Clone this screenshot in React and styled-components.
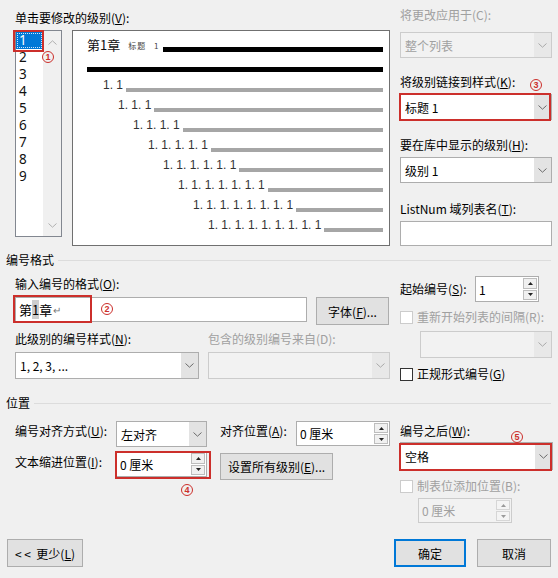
import React from 'react'
import styled, { createGlobalStyle, css } from 'styled-components'

const RED = '#cc2f2b'

const GlobalStyle = createGlobalStyle`
  html, body {
    margin: 0;
    padding: 0;
    background: #f0f0f0;
  }
  body {
    font-family: "Noto Sans CJK SC", "Noto Sans", sans-serif;
    font-size: 12px;
    color: #000;
  }
  u {
    text-decoration: underline;
    text-underline-offset: 1px;
  }
`

const Dialog = styled.div`
  position: relative;
  width: 558px;
  height: 578px;
  display: flex;
  flex-direction: column;
  background: #f0f0f0;
  overflow: hidden;
`

const Columns = styled.div`
  display: flex;
  gap: 10px;
  padding-left: 15px;
  margin-top: ${({ $top }) => $top || 0}px;
`

const MainCol = styled.div`
  width: 375px;
  flex: none;
`

const SideCol = styled.div`
  width: 152px;
  flex: none;
`

const Label = styled.div`
  height: 16px;
  line-height: 16px;
  white-space: nowrap;
  color: ${({ $disabled }) => ($disabled ? '#a0a0a0' : '#000')};
  margin-top: ${({ $top }) => $top || 0}px;
  margin-left: ${({ $left }) => $left || 0}px;
  margin-bottom: ${({ $gap }) => ($gap === undefined ? 4 : $gap)}px;
  width: ${({ $w }) => ($w ? `${$w}px` : 'auto')};
  flex: none;
`

/* ---------- level list & preview ---------- */

const LevelRow = styled.div`
  display: flex;
  gap: 10px;
  align-items: flex-start;
`

const LevelList = styled.div`
  width: 47px;
  height: 207px;
  box-sizing: border-box;
  border: 1px solid #828790;
  background: #fff;
  display: flex;
`

const LevelItems = styled.div`
  width: 27px;
  padding-top: 1px;
`

const LevelItem = styled.div`
  height: 17px;
  line-height: 17px;
  padding-left: 3px;
  font-family: "Noto Sans", sans-serif;
  font-size: 13.5px;
  color: #111;
  ${({ $selected }) =>
    $selected &&
    css`
      background: #0078d7;
      color: #fff;
      outline: 1px dotted #cfe6fb;
      outline-offset: -2px;
    `}
`

const ScrollBar = styled.div`
  width: 18px;
  background: #f0f0f0;
  display: flex;
  flex-direction: column;
  justify-content: space-between;
  align-items: center;
  padding: 9px 0 8px;
`

const Preview = styled.div`
  width: 318px;
  height: 216px;
  box-sizing: border-box;
  border: 1px solid #707070;
  background: #fff;
  padding: 5px 6px 0 14px;
  display: flex;
  flex-direction: column;
`

const HeadRow = styled.div`
  display: flex;
  align-items: flex-end;
  height: 18px;
  line-height: 18px;
`

const HeadNumber = styled.span`
  font-size: 13px;
  color: #111;
`

const StyleTag = styled.span`
  font-size: 8px;
  color: #444;
  margin-left: 8px;
  letter-spacing: 1px;
  word-spacing: 5px;
  line-height: 16px;
`

const Bar = styled.div`
  flex: 1;
  height: ${({ $h }) => $h || 4}px;
  background: ${({ $dark }) => ($dark ? '#000' : '#a6a6a6')};
  margin-left: ${({ $gap }) => ($gap === undefined ? 3 : $gap)}px;
  margin-bottom: ${({ $bottom }) => $bottom || 0}px;
`

const RuleBar = styled.div`
  height: 5px;
  background: #000;
  margin-top: 13px;
`

const LevelLine = styled.div`
  display: flex;
  align-items: flex-end;
  height: 14px;
  margin-top: 6px;
  padding-left: ${({ $indent }) => $indent}px;
`

const LevelNumber = styled.span`
  font-family: "Liberation Sans", Arial, sans-serif;
  font-size: 12px;
  line-height: 14px;
  color: #333;
  white-space: pre;
`

/* ---------- controls ---------- */

const Combo = styled.div`
  width: ${({ $w }) => $w}px;
  height: ${({ $h }) => $h || 26}px;
  box-sizing: border-box;
  border: 1px solid ${({ $disabled }) => ($disabled ? '#cccccc' : '#adadad')};
  background: ${({ $disabled }) => ($disabled ? '#f2f2f2' : '#fff')};
  color: ${({ $disabled }) => ($disabled ? '#a0a0a0' : '#000')};
  display: flex;
  margin-top: ${({ $top }) => $top || 0}px;
  margin-left: ${({ $left }) => $left || 0}px;
  flex: none;
`

const ComboText = styled.div`
  flex: 1;
  display: flex;
  align-items: center;
  padding-left: 4px;
  white-space: nowrap;
  font-size: 12px;
`

const ComboArrow = styled.div`
  width: 17px;
  background: ${({ $disabled }) => ($disabled ? '#e8e8e8' : '#e3e3e3')};
  display: flex;
  align-items: center;
  justify-content: center;
`

const TextBox = styled.div`
  width: ${({ $w }) => $w}px;
  height: 25px;
  box-sizing: border-box;
  border: 1px solid #adadad;
  background: #fff;
  display: flex;
  align-items: center;
  padding-left: 3px;
  font-size: 13px;
  flex: none;
`

const Selected = styled.span`
  background: #cdcdcd;
`

const ReturnMark = styled.span`
  color: #777;
  font-size: 10px;
  margin-left: 1px;
`

const Spin = styled.div`
  width: ${({ $w }) => $w}px;
  height: ${({ $h }) => $h || 25}px;
  box-sizing: border-box;
  border: 1px solid ${({ $disabled }) => ($disabled ? '#cccccc' : '#adadad')};
  background: ${({ $disabled }) => ($disabled ? '#f2f2f2' : '#fff')};
  color: ${({ $disabled }) => ($disabled ? '#a0a0a0' : '#000')};
  display: flex;
  flex: none;
  margin-top: ${({ $top }) => $top || 0}px;
  margin-left: ${({ $left }) => $left || 0}px;
`

const SpinText = styled.div`
  flex: 1;
  display: flex;
  align-items: center;
  padding-left: 3px;
  font-size: 12px;
  white-space: pre;
`

const SpinButtons = styled.div`
  width: 15px;
  display: flex;
  flex-direction: column;
  gap: 1px;
  padding: 1px 1px 1px 0;
  box-sizing: border-box;
`

const SpinButton = styled.div`
  flex: 1;
  border: 1px solid ${({ $disabled }) => ($disabled ? '#d6d6d6' : '#bdbdbd')};
  background: ${({ $disabled }) => ($disabled ? '#f4f4f4' : '#f0f0f0')};
  display: flex;
  align-items: center;
  justify-content: center;
`

const Button = styled.button`
  width: ${({ $w }) => $w}px;
  height: ${({ $h }) => $h || 28}px;
  box-sizing: border-box;
  border: ${({ $primary }) => ($primary ? '2px solid #0078d7' : '1px solid #adadad')};
  background: #e1e1e1;
  font-family: inherit;
  font-size: 12px;
  color: #000;
  padding: 0;
  margin-left: ${({ $left }) => $left || 0}px;
  margin-top: ${({ $top }) => $top || 0}px;
  flex: none;
  white-space: pre;
`

const CheckRow = styled.div`
  display: flex;
  align-items: center;
  gap: 4px;
  height: 16px;
  line-height: 16px;
  white-space: nowrap;
  margin-top: ${({ $top }) => $top || 0}px;
  color: ${({ $disabled }) => ($disabled ? '#a0a0a0' : '#000')};
`

const CheckBox = styled.span`
  width: 13px;
  height: 13px;
  box-sizing: border-box;
  border: 1px solid ${({ $disabled }) => ($disabled ? '#cccccc' : '#333')};
  background: #fff;
  flex: none;
`

const InlineRow = styled.div`
  display: flex;
  align-items: ${({ $align }) => $align || 'flex-start'};
  gap: ${({ $gap }) => $gap || 0}px;
  margin-top: ${({ $top }) => $top || 0}px;
`

const SectionTitle = styled.div`
  display: flex;
  align-items: center;
  height: 16px;
  line-height: 16px;
  padding: 0 7px 0 6px;
  margin-top: ${({ $top }) => $top}px;
  &::after {
    content: '';
    flex: 1;
    height: 1px;
    background: #dcdcdc;
    margin-left: 4px;
  }
`

const Footer = styled.div`
  margin-top: auto;
  display: flex;
  justify-content: space-between;
  padding: 0 7px 11px;
`

const FooterGroup = styled.div`
  display: flex;
  gap: 11px;
`

/* ---------- annotations (overlays) ---------- */

const Mark = styled.div`
  position: absolute;
  left: ${({ $x }) => $x}px;
  top: ${({ $y }) => $y}px;
  width: ${({ $w }) => $w}px;
  height: ${({ $h }) => $h}px;
  box-sizing: border-box;
  border: 2px solid ${RED};
  pointer-events: none;
`

const Callout = styled.div`
  position: absolute;
  left: ${({ $x }) => $x - 6}px;
  top: ${({ $y }) => $y - 6}px;
  width: 12px;
  height: 12px;
  box-sizing: border-box;
  border: 1.2px solid ${RED};
  border-radius: 50%;
  color: ${RED};
  font-family: "Liberation Sans", Arial, sans-serif;
  font-weight: bold;
  font-size: 9px;
  line-height: 10px;
  text-align: center;
`

/* ---------- small drawings ---------- */

const Chevron = ({ up, color = '#6b6b6b' }) => (
  <svg width="9" height="5" viewBox="0 0 9 5">
    <path
      d={up ? 'M0.5 4.5 L4.5 0.8 L8.5 4.5' : 'M0.5 0.5 L4.5 4.2 L8.5 0.5'}
      fill="none"
      stroke={color}
      strokeWidth="1"
    />
  </svg>
)

const Tri = ({ up, color }) => (
  <svg width="5" height="3" viewBox="0 0 5 3">
    <path d={up ? 'M0 3 L2.5 0 L5 3 Z' : 'M0 0 L2.5 3 L5 0 Z'} fill={color} />
  </svg>
)

const Dropdown = ({ w, h, top, left, disabled, children }) => (
  <Combo $w={w} $h={h} $top={top} $left={left} $disabled={disabled}>
    <ComboText>{children}</ComboText>
    <ComboArrow $disabled={disabled}>
      <Chevron color={disabled ? '#a8a8a8' : '#6b6b6b'} />
    </ComboArrow>
  </Combo>
)

const Spinner = ({ w, h, top, left, disabled, children }) => (
  <Spin $w={w} $h={h} $top={top} $left={left} $disabled={disabled}>
    <SpinText>{children}</SpinText>
    <SpinButtons>
      <SpinButton $disabled={disabled}>
        <Tri up color={disabled ? '#9a9a9a' : '#222'} />
      </SpinButton>
      <SpinButton $disabled={disabled}>
        <Tri color={disabled ? '#9a9a9a' : '#222'} />
      </SpinButton>
    </SpinButtons>
  </Spin>
)

const levels = [2, 3, 4, 5, 6, 7, 8, 9]

export default function App() {
  return (
    <>
      <GlobalStyle />
      <Dialog>
        {/* top: levels and preview */}
        <Columns>
          <MainCol>
            <Label $top={10}>
              单击要修改的级别(<u>V</u>):
            </Label>
            <LevelRow>
              <LevelList>
                <LevelItems>
                  {[1, 2, 3, 4, 5, 6, 7, 8, 9].map((n) => (
                    <LevelItem key={n} $selected={n === 1}>
                      {n}
                    </LevelItem>
                  ))}
                </LevelItems>
                <ScrollBar>
                  <Chevron up color="#b0b0b0" />
                  <Chevron color="#b0b0b0" />
                </ScrollBar>
              </LevelList>
              <Preview>
                <HeadRow>
                  <HeadNumber>第1章</HeadNumber>
                  <StyleTag>标题 1</StyleTag>
                  <Bar $dark $h={5} $gap={4} $bottom={2} />
                </HeadRow>
                <RuleBar />
                {levels.map((lv) => (
                  <LevelLine key={lv} $indent={16 + 15 * (lv - 2)}>
                    <LevelNumber>{Array(lv).fill('1').join('. ')}</LevelNumber>
                    <Bar />
                  </LevelLine>
                ))}
              </Preview>
            </LevelRow>
          </MainCol>
          <SideCol>
            <Label $top={7} $gap={9} $disabled>
              将更改应用于(C):
            </Label>
            <Dropdown w={152} disabled>
              整个列表
            </Dropdown>
            <Label $top={16}>
              将级别链接到样式(<u>K</u>):
            </Label>
            <Dropdown w={152}>标题 1</Dropdown>
            <Label $top={17}>
              要在库中显示的级别(<u>H</u>):
            </Label>
            <Dropdown w={152}>级别 1</Dropdown>
            <Label $top={18}>
              ListNum 域列表名(<u>T</u>):
            </Label>
            <TextBox $w={152} />
          </SideCol>
        </Columns>

        {/* number format */}
        <SectionTitle $top={6}>编号格式</SectionTitle>
        <Columns $top={8}>
          <MainCol>
            <Label $gap={5}>
              输入编号的格式(<u>O</u>):
            </Label>
            <InlineRow $gap={9}>
              <TextBox $w={292}>
                第<Selected>1</Selected>章<ReturnMark>↵</ReturnMark>
              </TextBox>
              <Button $w={73}>
                字体(<u>F</u>)...
              </Button>
            </InlineRow>
            <InlineRow $top={6}>
              <Label $w={193} $gap={5}>
                此级别的编号样式(<u>N</u>):
              </Label>
              <Label $gap={5} $disabled>
                包含的级别编号来自(D):
              </Label>
            </InlineRow>
            <InlineRow $gap={9}>
              <Dropdown w={184} h={27}>
                1, 2, 3, ...
              </Dropdown>
              <Dropdown w={182} h={27} disabled />
            </InlineRow>
          </MainCol>
          <SideCol>
            <InlineRow $align="center">
              <Label $w={75} $gap={0}>
                起始编号(<u>S</u>):
              </Label>
              <Spinner w={64} h={26}>
                1
              </Spinner>
            </InlineRow>
            <CheckRow $top={7} $disabled>
              <CheckBox $disabled />
              <span>重新开始列表的间隔(R):</span>
            </CheckRow>
            <Dropdown w={132} h={27} top={6} left={20} disabled />
            <CheckRow $top={8}>
              <CheckBox />
              <span>
                正规形式编号(<u>G</u>)
              </span>
            </CheckRow>
          </SideCol>
        </Columns>

        {/* position */}
        <SectionTitle $top={13}>位置</SectionTitle>
        <Columns $top={10}>
          <MainCol>
            <InlineRow>
              <Label $w={101} $top={2}>
                编号对齐方式(<u>U</u>):
              </Label>
              <Dropdown w={91}>左对齐</Dropdown>
              <Label $w={76} $left={13} $top={2}>
                对齐位置(<u>A</u>):
              </Label>
              <Spinner w={94}>0 厘米</Spinner>
            </InlineRow>
            <InlineRow $top={4}>
              <Label $w={101} $top={3}>
                文本缩进位置(<u>I</u>):
              </Label>
              <Spinner w={91} h={26}>
                0 厘米
              </Spinner>
              <Button $w={113} $h={27} $left={13} $top={2}>
                设置所有级别(<u>E</u>)...
              </Button>
            </InlineRow>
          </MainCol>
          <SideCol>
            <Label $top={2} $gap={3}>
              编号之后(<u>W</u>):
            </Label>
            <Dropdown w={153} h={28}>
              空格
            </Dropdown>
            <CheckRow $top={8} $disabled>
              <CheckBox $disabled />
              <span>制表位添加位置(B):</span>
            </CheckRow>
            <Spinner w={94} top={4} left={18} disabled>
              0 厘米
            </Spinner>
          </SideCol>
        </Columns>

        <Footer>
          <Button $w={76}>
            {'< <  更少('}
            <u>L</u>)
          </Button>
          <FooterGroup>
            <Button $w={72} $primary>
              确定
            </Button>
            <Button $w={74}>取消</Button>
          </FooterGroup>
        </Footer>

        {/* red annotations */}
        <Mark $x={13} $y={30} $w={31} $h={22} />
        <Callout $x={48} $y={57}>1</Callout>
        <Mark $x={13} $y={295} $w={79} $h={28} />
        <Callout $x={107} $y={309}>2</Callout>
        <Mark $x={399} $y={93} $w={152} $h={28} />
        <Callout $x={536} $y={85}>3</Callout>
        <Mark $x={115} $y={451} $w={96} $h={28} />
        <Callout $x={187} $y={490}>4</Callout>
        <Mark $x={399} $y={443} $w={153} $h={28} />
        <Callout $x={517} $y={437}>5</Callout>
      </Dialog>
    </>
  )
}
